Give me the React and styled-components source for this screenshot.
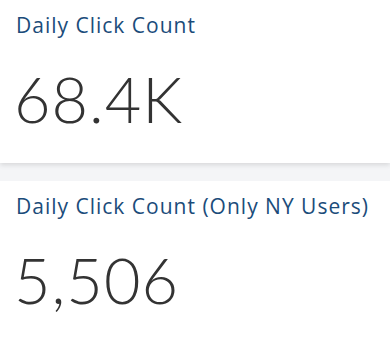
import React from "react";
import styled, { createGlobalStyle } from "styled-components";

const GlobalStyle = createGlobalStyle`
  html, body {
    margin: 0;
    padding: 0;
    background: #f4f5f7;
    font-family: Lato, "Open Sans", sans-serif;
    overflow: hidden;
  }
`;

const tiles = [
  { title: "Daily Click Count", value: "68.4K" },
  { title: "Daily Click Count (Only NY Users)", value: "5,506" },
];

const App = () => {
  return (
    <>
      <GlobalStyle />
      <Page>
        {tiles.map((tile) => (
          <Tile key={tile.title}>
            <TileTitle>{tile.title}</TileTitle>
            <TileValue>{tile.value}</TileValue>
          </Tile>
        ))}
      </Page>
    </>
  );
};

export default App;

const Page = styled.div`
  display: flex;
  flex-direction: column;
  gap: 18px;
  width: 390px;
  min-height: 100vh;
`;

const Tile = styled.div`
  background: #ffffff;
  padding: 12px 16px 0;
  height: 151px;
  flex-shrink: 0;
  box-shadow: 0 2px 5px rgba(0, 0, 0, 0.12);

  &:last-child {
    flex-grow: 1;
    box-shadow: none;
  }
`;

const TileTitle = styled.div`
  font-family: "Open Sans", sans-serif;
  font-size: 21px;
  font-weight: 500;
  line-height: 26px;
  letter-spacing: 1px;
  color: #1b4c7a;
`;

const TileValue = styled.div`
  margin-top: 29px;
  font-family: Lato, sans-serif;
  font-weight: 300;
  font-size: 63px;
  line-height: 64px;
  letter-spacing: 1px;
  color: #333333;
  margin-left: -2px;
`;
